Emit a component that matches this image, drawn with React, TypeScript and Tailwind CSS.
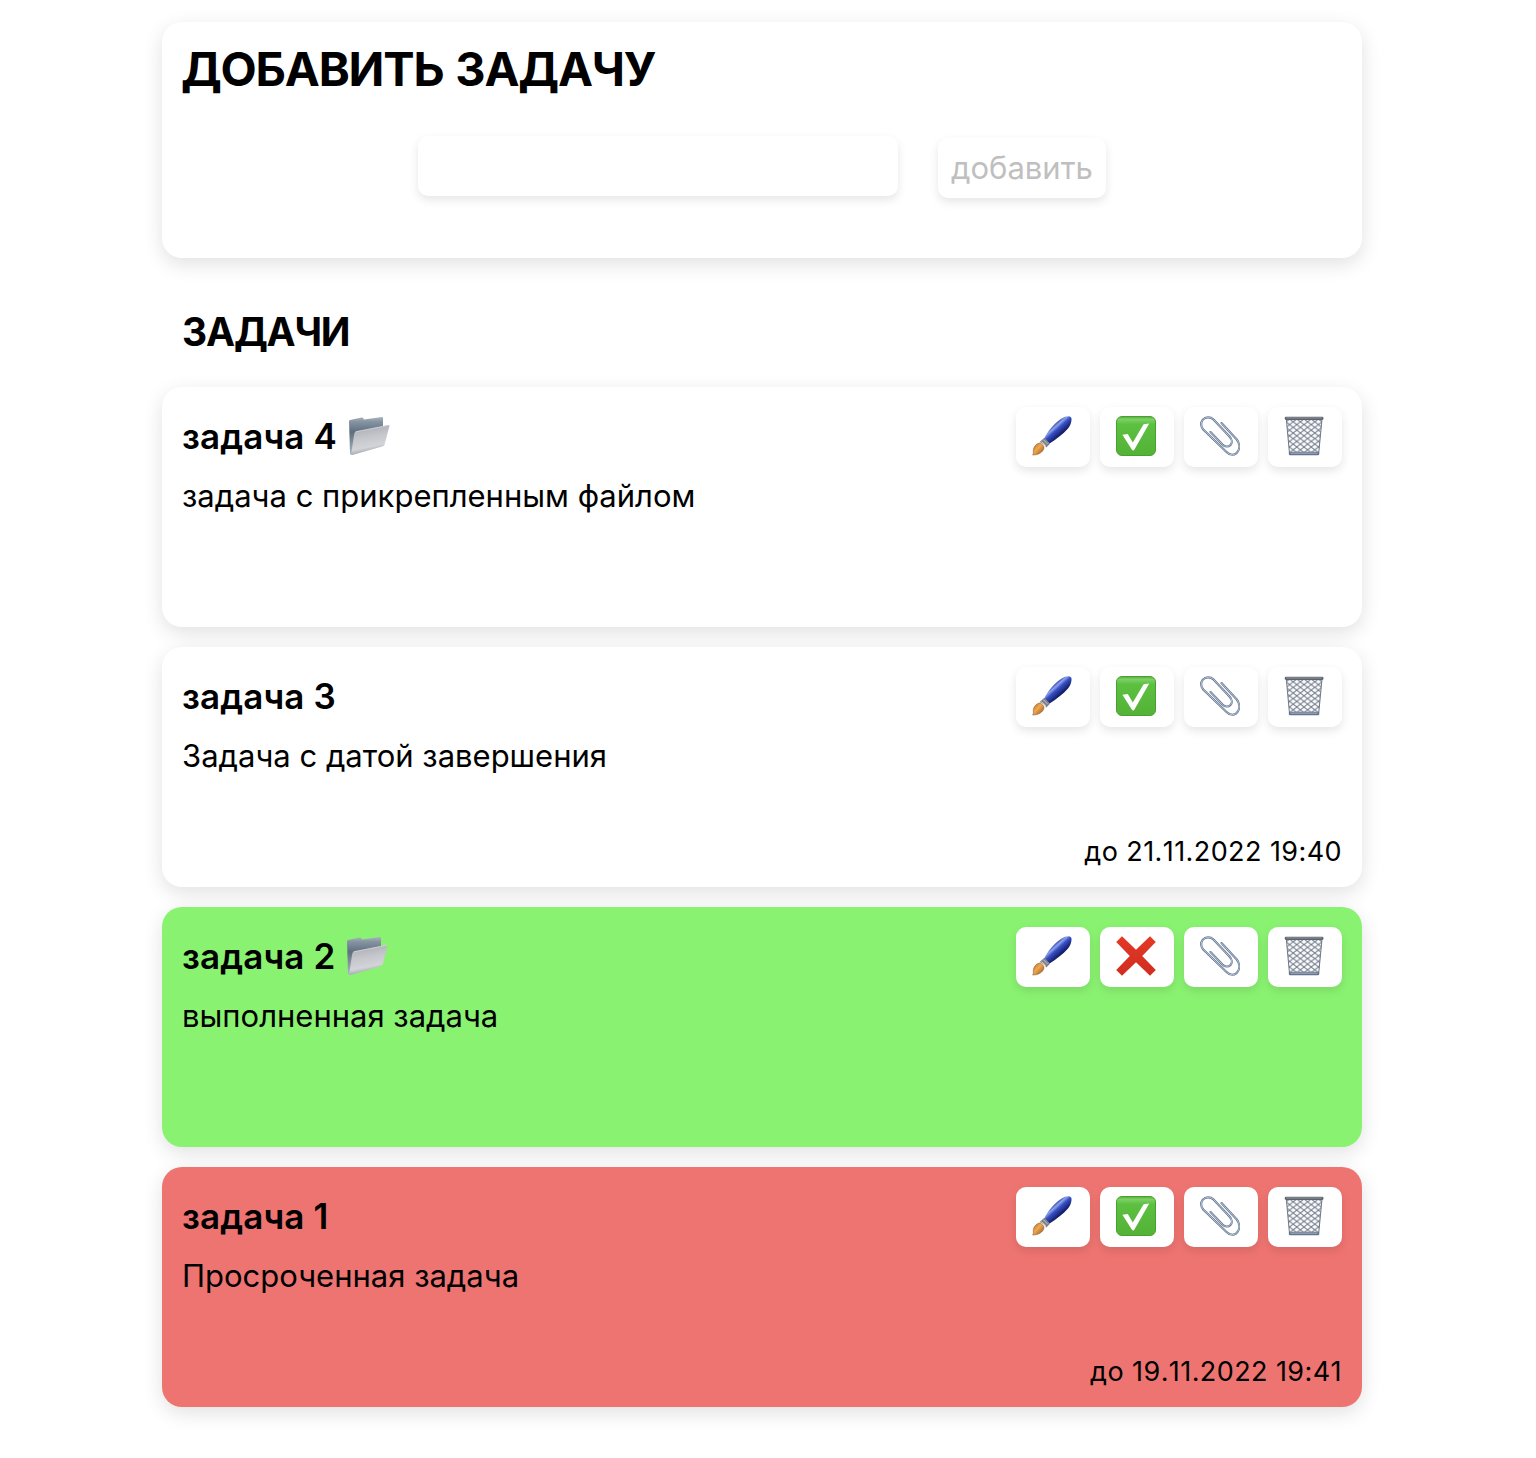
import React from "react";

const CARD = "rounded-[20px] shadow-[0_6px_20px_rgba(0,0,0,0.12)]";

function Brush() {
  return (
    <svg width="40" height="40" viewBox="0 0 40 40">
      <defs>
        <linearGradient id="handle" gradientUnits="userSpaceOnUse" x1="21" y1="9" x2="29" y2="18">
          <stop offset="0" stopColor="#2b3fa4" />
          <stop offset="0.25" stopColor="#8ea2ec" />
          <stop offset="0.5" stopColor="#3650c4" />
          <stop offset="1" stopColor="#151d6a" />
        </linearGradient>
        <linearGradient id="hair" x1="0" y1="0" x2="1" y2="1">
          <stop offset="0" stopColor="#a8651f" />
          <stop offset="0.45" stopColor="#f0a850" />
          <stop offset="1" stopColor="#8a4c14" />
        </linearGradient>
      </defs>
      <path d="M12.3 22.5 C15 16 24 4.5 32.5 1 C36 -0.3 38.6 0.2 39.3 1.8 C40 4 39 9 36 12.5 C31 18.5 24 23 17.6 27.6 Z" fill="url(#handle)" />
      <path d="M12.3 21.8 L18 27.8 L14.3 31.5 C13 29 10.5 26.8 7.6 25.9 Z" fill="#7d8086" />
      <path d="M11.2 23.5 L15.8 28.2 M9.3 25.4 L14 29.8" stroke="#c6c8cc" strokeWidth="0.9" />
      <path d="M7.2 27 C9.5 27.3 12 29.5 12 31.8 C11.5 36.5 5.5 39.2 0.6 39 C2.2 37.5 0.6 35.2 1.8 32 C2.8 29.5 5 27.5 7.2 27 Z" fill="url(#hair)" stroke="#85501a" strokeWidth="0.5" />
    </svg>
  );
}

function Check() {
  return (
    <svg width="40" height="40" viewBox="0 0 40 40">
      <defs>
        <linearGradient id="green" x1="0" y1="0" x2="0" y2="1">
          <stop offset="0" stopColor="#4fae33" />
          <stop offset="0.07" stopColor="#7fd068" />
          <stop offset="0.2" stopColor="#5cc040" />
          <stop offset="1" stopColor="#54b237" />
        </linearGradient>
      </defs>
      <rect x="0.5" y="0.5" width="39" height="39" rx="5.5" fill="url(#green)" stroke="#48a030" strokeWidth="1" />
      <path d="M6.4 18.8 L11.8 18 L16.8 26.4 L27.6 8.2 L33.2 7.4 L18.6 33.2 Q17.2 35.6 15.8 33.4 Z" fill="#fff" />
    </svg>
  );
}

function Cross() {
  return (
    <svg width="40" height="40" viewBox="0 0 40 40">
      <defs>
        <linearGradient id="red" x1="0" y1="0" x2="0" y2="1">
          <stop offset="0" stopColor="#e43a26" />
          <stop offset="1" stopColor="#d02c20" />
        </linearGradient>
      </defs>
      <path d="M6 0.2 L20 13.8 L34 0.2 L39.8 6 L26.2 20 L39.8 34 L34 39.8 L20 26.2 L6 39.8 L0.2 34 L13.8 20 L0.2 6 Z" fill="url(#red)" />
    </svg>
  );
}

const CLIP_WIRE =
  "M21.5 7 L36.8 23.5 C39.5 27 40 32 37.8 35.5 C35.5 39.6 30 39.8 26.5 36 L3.2 13.5 C0.9 10.5 0.7 6.5 2.8 3.7 C5.4 0.6 10.5 0.6 13.5 3.5 L29.5 20.5 C32.2 23.5 32.4 27 30.5 29 C28.4 31.2 25 31 22.5 28.5 L10.5 16";

function Clip() {
  return (
    <svg width="40" height="40" viewBox="0 0 40 40" fill="none" strokeLinecap="round" strokeLinejoin="round">
      <path d={CLIP_WIRE} stroke="#66758c" strokeWidth="2.1" />
      <path d={CLIP_WIRE} stroke="#b4c6de" strokeWidth="1" />
    </svg>
  );
}

function Basket() {
  return (
    <svg width="40" height="40" viewBox="0 0 40 40">
      <defs>
        <pattern id="mesh" width="7.2" height="5.6" patternUnits="userSpaceOnUse" x="-1.6" y="3">
          <path d="M0 0 L7.2 5.6 M7.2 0 L0 5.6" stroke="#737c89" strokeWidth="0.95" />
        </pattern>
      </defs>
      <path d="M2.3 3 L38 3 L34.7 37.5 L5.5 37.5 Z" fill="#fafbfd" />
      <path d="M2.3 3 L38 3 L34.7 37.5 L5.5 37.5 Z" fill="url(#mesh)" stroke="#6f7887" strokeWidth="1" />
      <rect x="0.7" y="0.8" width="38.8" height="3.2" rx="1.4" fill="#5d636c" />
      <rect x="2" y="1.5" width="36" height="0.9" fill="#99a0aa" />
      <rect x="4.8" y="35.8" width="30.4" height="3.4" rx="1.2" fill="#66758c" />
      <rect x="6.5" y="36.6" width="27" height="1" fill="#a3b4ca" />
    </svg>
  );
}

function Folder() {
  return (
    <svg width="42" height="40" viewBox="0 0 42 40">
      <defs>
        <linearGradient id="back" x1="0" y1="0" x2="0" y2="1">
          <stop offset="0" stopColor="#a9b5c0" />
          <stop offset="0.12" stopColor="#8795a3" />
          <stop offset="0.4" stopColor="#5f6e7e" />
          <stop offset="1" stopColor="#a9b8c4" />
        </linearGradient>
        <linearGradient id="front" x1="0" y1="0" x2="0.25" y2="1">
          <stop offset="0" stopColor="#a3a6ad" />
          <stop offset="0.5" stopColor="#c6c7cc" />
          <stop offset="0.8" stopColor="#d3d4d8" />
          <stop offset="1" stopColor="#999ea6" />
        </linearGradient>
      </defs>
      <path d="M1 5.2 Q1 4.2 2 4 L13.5 1.6 Q15 1.3 15.4 2.3 L16 3.4 L34 1 Q35 0.9 35 2 L35 28 L4 38.6 Q2 39 2 37.5 Z" fill="url(#back)" />
      <path d="M6.3 17.3 Q6.8 15.6 8.5 15.2 L40.5 8.9 Q41.8 8.7 41.4 10.2 L36.6 28.5 Q36.3 29.8 35 30.2 L4.5 39 Q3 39.2 3.2 37.8 Z" fill="url(#front)" />
      <path d="M7.6 15.8 L40.9 9.2" stroke="#dfe1e5" strokeWidth="0.6" />
    </svg>
  );
}

function Tool({ children, label }: { children: React.ReactNode; label: string }) {
  return (
    <button aria-label={label} className="flex h-[60px] w-[74px] items-center justify-center rounded-[10px] bg-white pb-0.5 pr-0.5 shadow-[0_4px_10px_rgba(0,0,0,0.1)]">
      {children}
    </button>
  );
}

type Task = { title: string; text: string; file?: boolean; due?: string; done?: boolean; bg: string };

const tasks: Task[] = [
  { title: "задача 4", text: "задача с прикрепленным файлом", file: true, bg: "bg-white" },
  { title: "задача 3", text: "Задача с датой завершения", due: "до 21.11.2022 19:40", bg: "bg-white" },
  { title: "задача 2", text: "выполненная задача", file: true, done: true, bg: "bg-[#8af271]" },
  { title: "задача 1", text: "Просроченная задача", due: "до 19.11.2022 19:41", bg: "bg-[#ee7471]" },
];

function TaskCard({ task }: { task: Task }) {
  return (
    <article className={`flex h-[240px] flex-col p-5 ${CARD} ${task.bg}`}>
      <div className="flex h-[60px] justify-between">
        <h3 className="flex h-[58px] items-center gap-[11px] text-[35px] font-semibold leading-[58px] tracking-[0.12px]">
          <span>{task.title}</span>
          {task.file && <Folder />}
        </h3>
        <div className="flex gap-2.5">
          <Tool label="Редактировать"><Brush /></Tool>
          <Tool label="Готово">{task.done ? <Cross /> : <Check />}</Tool>
          <Tool label="Прикрепить"><Clip /></Tool>
          <Tool label="Удалить"><Basket /></Tool>
        </div>
      </div>
      <p className="mt-[9px] text-[31px] leading-[40px]">{task.text}</p>
      {task.due && <p className="-mb-1 mt-auto text-right text-[27px] leading-[38px] tracking-[0.42px] [font-kerning:none]">{task.due}</p>}
    </article>
  );
}

export default function App() {
  return (
    <main className="min-h-[1458px] bg-white pl-[162px] pt-[22px] font-['Inter',sans-serif] text-black">
      <div className="w-[1200px]">
        <section className={`h-[236px] bg-white px-5 pt-[17px] ${CARD}`}>
          <h1 className="-ml-px text-[47px] font-bold leading-[60px] tracking-[-1.2px] [word-spacing:2px]">ДОБАВИТЬ ЗАДАЧУ</h1>
          <div className="mt-[37px] flex justify-center gap-10">
            <input className="h-[60px] w-[480px] rounded-[10px] bg-white px-3 text-[32px] shadow-[0_4px_10px_rgba(0,0,0,0.1)] outline-none" />
            <button className="mt-0.5 h-[60px] w-[168px] rounded-[10px] bg-white text-[31px] text-[#bfbfbf] shadow-[0_4px_10px_rgba(0,0,0,0.1)]">добавить</button>
          </div>
        </section>
        <h2 className="ml-5 mt-[49px] text-[39px] font-bold leading-[50px] tracking-[-1.2px]">ЗАДАЧИ</h2>
        <div className="mt-[30px] flex flex-col gap-5">
          {tasks.map((t) => <TaskCard key={t.title} task={t} />)}
        </div>
      </div>
    </main>
  );
}
